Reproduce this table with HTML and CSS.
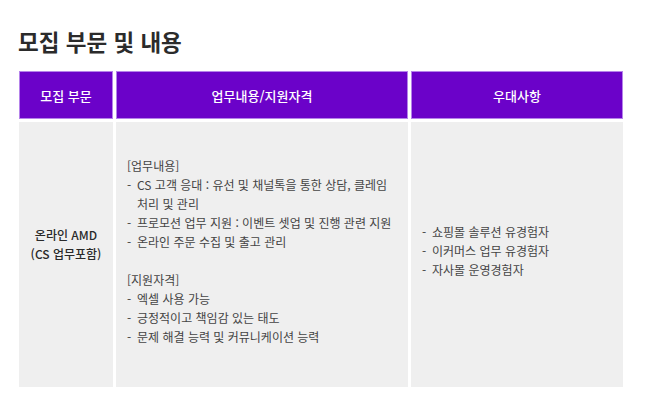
FILE: index.html
```html
<!DOCTYPE html>
<html lang="ko">
<head>
<meta charset="utf-8">
<link rel="stylesheet" href="styles.css">
</head>
<body>
<div class="page">
  <h2 class="title">모집 부문 및 내용</h2>
  <div class="grid">
    <div class="head">모집 부문</div>
    <div class="head">업무내용/지원자격</div>
    <div class="head">우대사항</div>
    <div class="cell center strong">
      <p>온라인 AMD<br>(CS 업무포함)</p>
    </div>
    <div class="cell">
      <div class="block">
        <p>[업무내용]</p>
        <ul>
          <li>CS 고객 응대 : 유선 및 채널톡을 통한 상담, 클레임 처리 및 관리</li>
          <li>프로모션 업무 지원 : 이벤트 셋업 및 진행 관련 지원</li>
          <li>온라인 주문 수집 및 출고 관리</li>
        </ul>
        <p class="gap">[지원자격]</p>
        <ul>
          <li>엑셀 사용 가능</li>
          <li>긍정적이고 책임감 있는 태도</li>
          <li>문제 해결 능력 및 커뮤니케이션 능력</li>
        </ul>
      </div>
    </div>
    <div class="cell">
      <ul>
        <li>쇼핑몰 솔루션 유경험자</li>
        <li>이커머스 업무 유경험자</li>
        <li>자사몰 운영경험자</li>
      </ul>
    </div>
  </div>
</div>
</body>
</html>
```

FILE: styles.css
```css
* { box-sizing: border-box; }
html, body { margin: 0; padding: 0; background: #fff; }
body {
  font-family: "Noto Sans CJK KR", "Noto Sans", sans-serif;
  color: #444;
}
.page { padding: 26px 0 0 18px; }
.title {
  margin: 0 0 14px 0;
  font-size: 22.5px;
  line-height: 31px;
  font-weight: 700;
  color: #2b2b2b;
}
.grid {
  display: grid;
  grid-template-columns: 94px 292px 212px;
  grid-template-rows: 48px 265px;
  gap: 3px;
  margin-left: 1px;
}
.head {
  background: #6b02c9;
  border: 1px solid #b583ea;
  color: #fff;
  font-size: 13px;
  font-weight: 500;
  display: flex;
  align-items: center;
  justify-content: center;
}
.cell {
  background: #efefef;
  font-size: 12px;
  line-height: 19px;
  display: flex;
  align-items: center;
  padding: 0 10px 8px 11px;
}
.cell p { margin: 0; }
.cell .gap { margin-top: 19px; }
.center { justify-content: center; text-align: center; padding: 0 0 22px 0; }
.strong { color: #2a2a2a; font-weight: 500; }
ul { list-style: none; margin: 0; padding: 0; }
li { position: relative; padding-left: 10px; }
li::before { content: "-"; position: absolute; left: 0; top: 0; }
```
